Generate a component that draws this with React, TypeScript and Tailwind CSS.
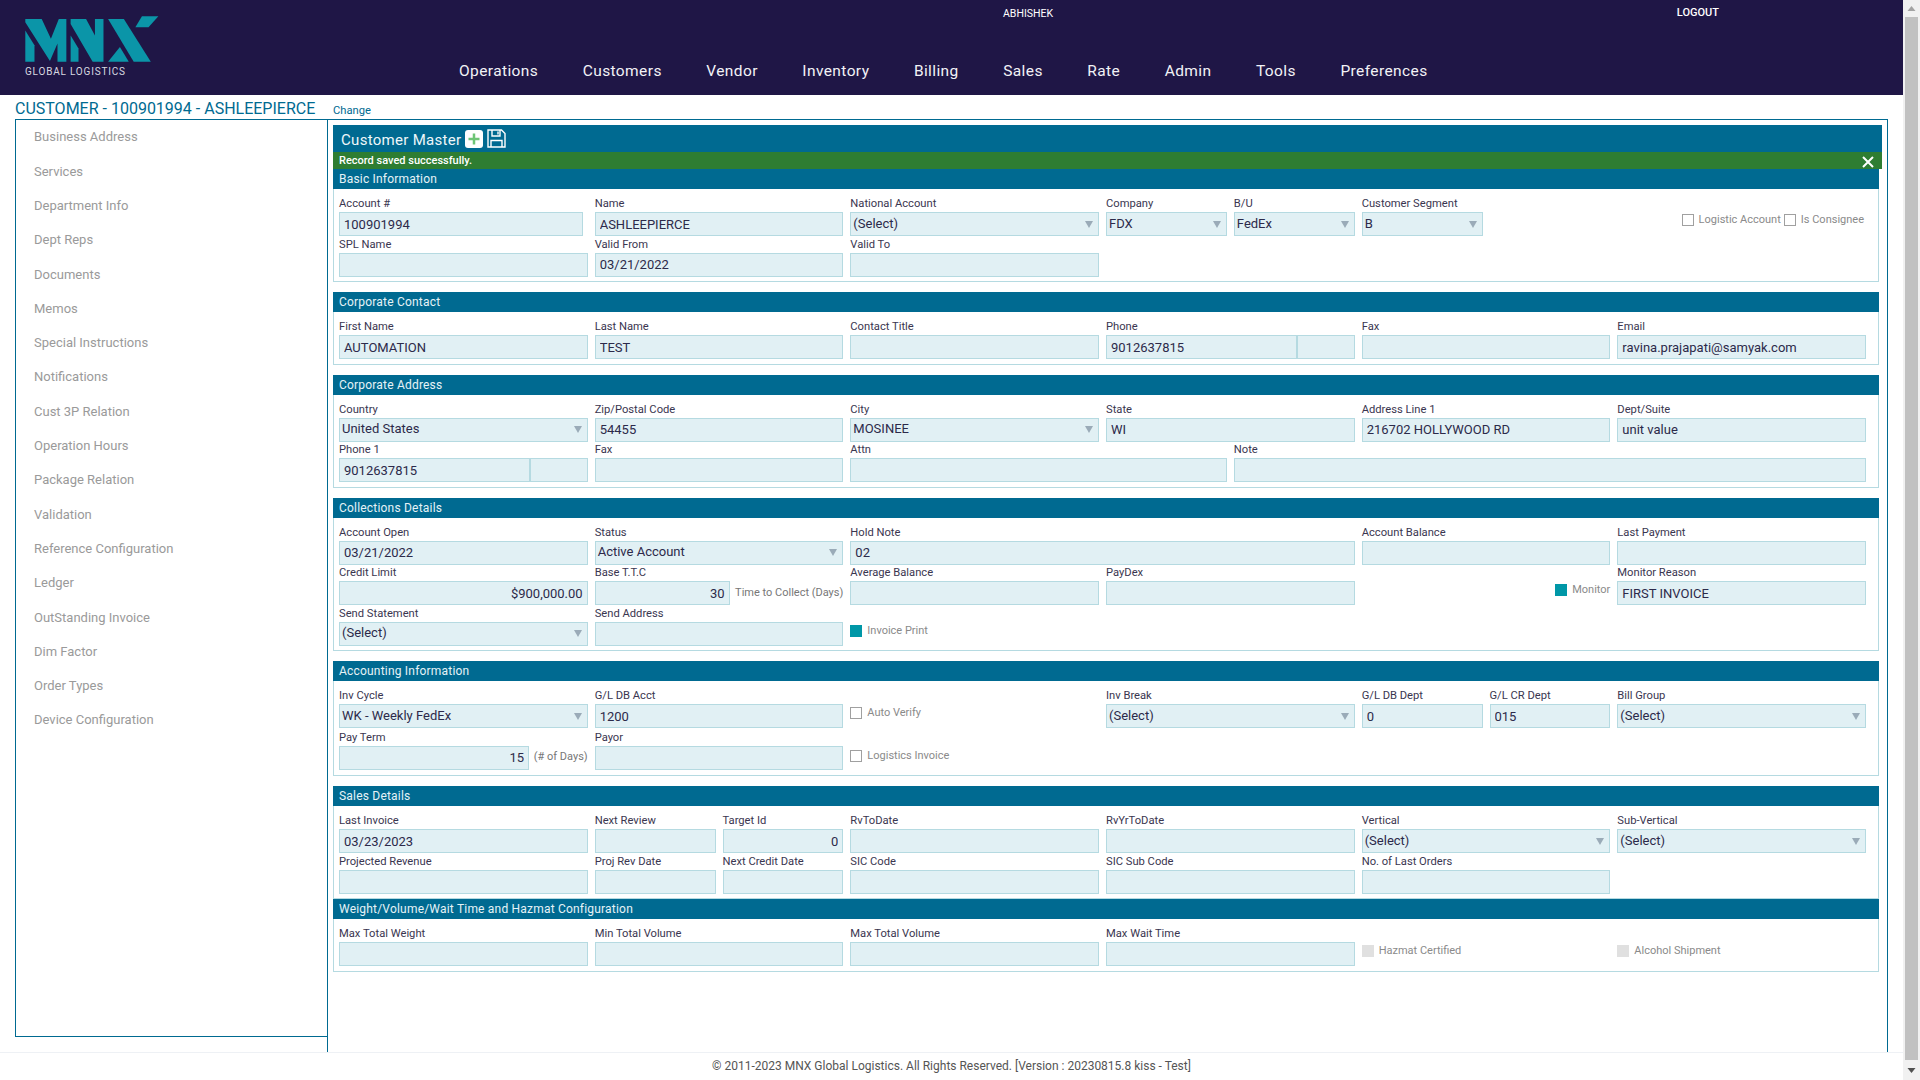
import type { ReactNode } from "react";

const spans: Record<number, string> = {
  1: "col-span-1",
  2: "col-span-2",
  3: "col-span-3",
  4: "col-span-4",
  5: "col-span-5",
};

const menu = ["Operations", "Customers", "Vendor", "Inventory", "Billing", "Sales", "Rate", "Admin", "Tools", "Preferences"];

const sideLinks = [
  "Business Address",
  "Services",
  "Department Info",
  "Dept Reps",
  "Documents",
  "Memos",
  "Special Instructions",
  "Notifications",
  "Cust 3P Relation",
  "Operation Hours",
  "Package Relation",
  "Validation",
  "Reference Configuration",
  "Ledger",
  "OutStanding Invoice",
  "Dim Factor",
  "Order Types",
  "Device Configuration",
];

function Logo() {
  return (
    <svg width="138" height="54" viewBox="0 0 420 162" className="block" fill="#0b95a8">
      <polygon points="10,55 38,100 38,150 10,150" />
      <polygon points="10,20 60,20 88,80 112,20 135,20 135,150 108,150 108,95 85,148 10,30" />
      <polygon points="148,70 172,110 172,150 148,150" />
      <polygon points="148,20 195,20 222,70 222,20 248,20 248,150 215,150 148,35" />
      <polygon points="262,20 310,20 392,150 340,150" />
      <polygon points="365,12 415,12 385,45 345,45" />
      <polygon points="298,105 325,150 262,150" />
    </svg>
  );
}

function Input({ value, right, className = "" }: { value?: string; right?: boolean; className?: string }) {
  return (
    <input
      readOnly
      value={value ?? ""}
      className={`block h-6 min-w-0 border border-[#b5dae1] bg-[#e1f0f4] px-[4px] text-[13px] text-[#2c2a4a] outline-none ${right ? "text-right" : ""} ${className}`}
    />
  );
}

function Select({ value }: { value: string }) {
  return (
    <div className="flex h-6 w-full items-center justify-between border border-[#b5dae1] bg-[#e1f0f4] pl-[2px] pr-[5px] text-[13px] text-[#2c2a4a]">
      <span className="-mt-[1px]">{value}</span>
      <svg width="8" height="7" viewBox="0 0 8 7" fill="#9aabb8">
        <polygon points="0,0 8,0 4,7" />
      </svg>
    </div>
  );
}

function Field({ label, span = 2, children }: { label: string; span?: number; children: ReactNode }) {
  return (
    <div className={spans[span]}>
      <label className="block h-[16.5px] pt-[0.5px] text-[11.2px] leading-[15px] text-[#3a3650]">{label}</label>
      {children}
    </div>
  );
}

function Text({ label, value, span = 2, right }: { label: string; value?: string; span?: number; right?: boolean }) {
  return (
    <Field label={label} span={span}>
      <Input value={value} right={right} className="w-full" />
    </Field>
  );
}

function Drop({ label, value = "(Select)", span = 2 }: { label: string; value?: string; span?: number }) {
  return (
    <Field label={label} span={span}>
      <Select value={value} />
    </Field>
  );
}

function Check({ label, state = "off" }: { label: string; state?: "off" | "on" | "disabled" }) {
  const box =
    state === "on" ? "bg-[#0097a7]" : state === "disabled" ? "bg-[#e0e0e0]" : "border border-[#a0a0a0] bg-white";
  return (
    <span className="flex items-center gap-[5px] text-[11px] leading-3 text-[#8a8a8a]">
      <span className={`block h-3 w-3 shrink-0 ${box}`} />
      {label}
    </span>
  );
}

function CheckCell({ span = 2, end, low, children }: { span?: number; end?: boolean; low?: boolean; children: ReactNode }) {
  return (
    <div className={`${spans[span]} flex items-start gap-[4px] ${low ? "pt-[20.5px]" : "pt-[19.5px]"} ${end ? "justify-end" : ""}`}>
      {children}
    </div>
  );
}

function Section({ title, flush, tall, children }: { title: string; flush?: boolean; tall?: boolean; children: ReactNode }) {
  return (
    <section className={`w-[1546px] ${flush ? "" : "mb-[10px]"}`}>
      <h3 className="flex h-5 items-center bg-[#006a91] pl-[6px] text-[12px] font-normal tracking-[0.2px] text-[#e6f3f7]">{title}</h3>
      <div className={`grid grid-cols-12 gap-x-[7px] border border-t-0 border-[#b5dae1] pl-[5px] pr-[12px] pt-[6.5px] ${tall ? "gap-y-[1px] pb-[5.5px]" : "pb-[4.5px]"}`}>
        {children}
      </div>
    </section>
  );
}

export default function App() {
  return (
    <div className="flex h-[1080px] w-[1920px] overflow-hidden bg-white font-[Roboto,sans-serif]">
      <div className="flex w-[1903px] flex-col">
        <header className="flex h-[95px] shrink-0 bg-[#1f1646] text-white">
          <div className="w-[459px] pl-[22px] pt-[12px]">
            <Logo />
            <div className="ml-[3px] text-[10px] leading-3 tracking-[0.8px] text-[#d8d8e0]">GLOBAL LOGISTICS</div>
          </div>
          <div className="flex flex-col">
            <div className="ml-[544px] flex h-[24px] w-[716px] text-[10.5px] leading-3">
              <span className="w-[676px] pt-[8px]">ABHISHEK</span>
              <span className="pt-[7px] text-[11px] font-medium">LOGOUT</span>
            </div>
            <nav className="mt-[35px] flex gap-[44.5px] text-[15.5px] leading-6 tracking-[0.4px] text-[#f2f2f6]">
              {menu.map((m) => (
                <a key={m}>{m}</a>
              ))}
            </nav>
          </div>
        </header>

        <div className="flex h-[24px] shrink-0 pl-[15px]">
          <h1 className="w-[318px] pt-[4px] text-[16px] font-normal leading-5 whitespace-nowrap text-[#006a91]">
            CUSTOMER - 100901994 - ASHLEEPIERCE
          </h1>
          <a className="pt-[8px] text-[11.2px] leading-4 text-[#006a91]">Change</a>
        </div>

        <div className="flex h-[933px] pl-[15px]">
          <aside className="h-[918px] w-[312px] shrink-0 border-y border-l border-[#006a91]">
            {sideLinks.map((s) => (
              <a key={s} className="flex h-[34.3px] items-center pl-[18px] text-[13px] text-[#9a9a9a]">
                {s}
              </a>
            ))}
          </aside>
          <main className="w-[1561px] border border-b-0 border-[#006a91] pl-[5px] pt-[5px]">
            <div className="flex h-[27px] w-[1549px] items-center gap-[4px] bg-[#006a91] pl-[8px]">
              <span className="mt-[4px] text-[15px] tracking-[0.3px] text-[#eef7fa]">Customer Master</span>
              <svg width="18" height="18" viewBox="0 0 18 18">
                <rect width="18" height="18" rx="3" fill="#fff" />
                <path d="M9 3.5v11M3.5 9h11" stroke="#6fc576" strokeWidth="2.5" />
              </svg>
              <svg width="19" height="19" viewBox="0 0 19 19" fill="none" stroke="#fff" strokeWidth="1.4">
                <path d="M1 1h13.5L18 4.5V18H1z" />
                <path d="M5 1v6h8V1M11 2.5v3M4 18v-6.5h11V18" />
              </svg>
            </div>
            <div className="flex h-[17px] w-[1549px] items-center justify-between bg-[#2e7d32] pl-[6px] pr-[8px] pt-[1px] text-[11px] font-medium text-white">
              <span>Record saved successfully.</span>
              <svg width="12" height="12" viewBox="0 0 12 12" stroke="#fff" strokeWidth="2" className="mt-[1px]">
                <path d="M1 1l10 10M11 1L1 11" />
              </svg>
            </div>

            <Section title="Basic Information">
              <Field label="Account #">
                <Input value="100901994" className="w-[244px]" />
              </Field>
              <Text label="Name" value="ASHLEEPIERCE" />
              <Drop label="National Account" />
              <Drop label="Company" value="FDX" span={1} />
              <Drop label="B/U" value="FedEx" span={1} />
              <Drop label="Customer Segment" value="B" span={1} />
              <CheckCell span={3} end>
                <div className="-mt-[1px] flex gap-[3px] pr-[2px]">
                  <Check label="Logistic Account" />
                  <Check label="Is Consignee" />
                </div>
              </CheckCell>
              <Text label="SPL Name" />
              <Text label="Valid From" value="03/21/2022" />
              <Text label="Valid To" />
            </Section>

            <Section title="Corporate Contact">
              <Text label="First Name" value="AUTOMATION" />
              <Text label="Last Name" value="TEST" />
              <Text label="Contact Title" />
              <Field label="Phone">
                <div className="flex">
                  <Input value="9012637815" className="w-[191px]" />
                  <Input className="flex-1" />
                </div>
              </Field>
              <Text label="Fax" />
              <Text label="Email" value="ravina.prajapati@samyak.com" />
            </Section>

            <Section title="Corporate Address">
              <Drop label="Country" value="United States" />
              <Text label="Zip/Postal Code" value="54455" />
              <Drop label="City" value="MOSINEE" />
              <Text label="State" value="WI" />
              <Text label="Address Line 1" value="216702 HOLLYWOOD RD" />
              <Text label="Dept/Suite" value="unit value" />
              <Field label="Phone 1">
                <div className="flex">
                  <Input value="9012637815" className="w-[191px]" />
                  <Input className="flex-1" />
                </div>
              </Field>
              <Text label="Fax" />
              <Text label="Attn" span={3} />
              <Text label="Note" span={5} />
            </Section>

            <Section title="Collections Details">
              <Text label="Account Open" value="03/21/2022" />
              <Drop label="Status" value="Active Account" />
              <Text label="Hold Note" value="02" span={4} />
              <Text label="Account Balance" />
              <Text label="Last Payment" />
              <Text label="Credit Limit" value="$900,000.00" right />
              <Field label="Base T.T.C">
                <div className="flex items-center justify-between">
                  <Input value="30" right className="w-[135px]" />
                  <span className="text-[11px] whitespace-nowrap text-[#777]">Time to Collect (Days)</span>
                </div>
              </Field>
              <Text label="Average Balance" />
              <Text label="PayDex" />
              <CheckCell end>
                <Check label="Monitor" state="on" />
              </CheckCell>
              <Text label="Monitor Reason" value="FIRST INVOICE" />
              <Drop label="Send Statement" />
              <Text label="Send Address" />
              <CheckCell>
                <Check label="Invoice Print" state="on" />
              </CheckCell>
            </Section>

            <Section title="Accounting Information" tall>
              <Drop label="Inv Cycle" value="WK - Weekly FedEx" />
              <Text label="G/L DB Acct" value="1200" />
              <CheckCell>
                <Check label="Auto Verify" />
              </CheckCell>
              <Drop label="Inv Break" />
              <Text label="G/L DB Dept" value="0" span={1} />
              <Text label="G/L CR Dept" value="015" span={1} />
              <Drop label="Bill Group" />
              <Field label="Pay Term">
                <div className="flex items-center justify-between">
                  <Input value="15" right className="w-[190px]" />
                  <span className="text-[11px] whitespace-nowrap text-[#777]">(# of Days)</span>
                </div>
              </Field>
              <Text label="Payor" />
              <CheckCell low>
                <Check label="Logistics Invoice" />
              </CheckCell>
            </Section>

            <Section title="Sales Details" flush>
              <Text label="Last Invoice" value="03/23/2023" />
              <Text label="Next Review" span={1} />
              <Text label="Target Id" value="0" span={1} right />
              <Text label="RvToDate" />
              <Text label="RvYrToDate" />
              <Drop label="Vertical" />
              <Drop label="Sub-Vertical" />
              <Text label="Projected Revenue" />
              <Text label="Proj Rev Date" span={1} />
              <Text label="Next Credit Date" span={1} />
              <Text label="SIC Code" />
              <Text label="SIC Sub Code" />
              <Text label="No. of Last Orders" />
            </Section>

            <Section title="Weight/Volume/Wait Time and Hazmat Configuration" flush>
              <Text label="Max Total Weight" />
              <Text label="Min Total Volume" />
              <Text label="Max Total Volume" />
              <Text label="Max Wait Time" />
              <CheckCell>
                <Check label="Hazmat Certified" state="disabled" />
              </CheckCell>
              <CheckCell>
                <Check label="Alcohol Shipment" state="disabled" />
              </CheckCell>
            </Section>
          </main>
        </div>

        <footer className="flex h-[28px] items-center justify-center border-t border-[#eef1f5] pb-[2px] text-[12px] text-[#555]">
          © 2011-2023 MNX Global Logistics. All Rights Reserved. [Version : 20230815.8 kiss - Test]
        </footer>
      </div>

      <div className="flex w-[17px] flex-col items-center bg-[#f1f1f1]">
        <svg width="9" height="17" viewBox="0 0 9 17" fill="#a3a3a3">
          <polygon points="4.5,6 8.5,11 0.5,11" />
        </svg>
        <div className="h-[1043px] w-[13px] bg-[#c1c1c1]" />
        <svg width="9" height="17" viewBox="0 0 9 17" fill="#505050" className="mt-[2px]">
          <polygon points="0.5,6 8.5,6 4.5,11" />
        </svg>
      </div>
    </div>
  );
}
